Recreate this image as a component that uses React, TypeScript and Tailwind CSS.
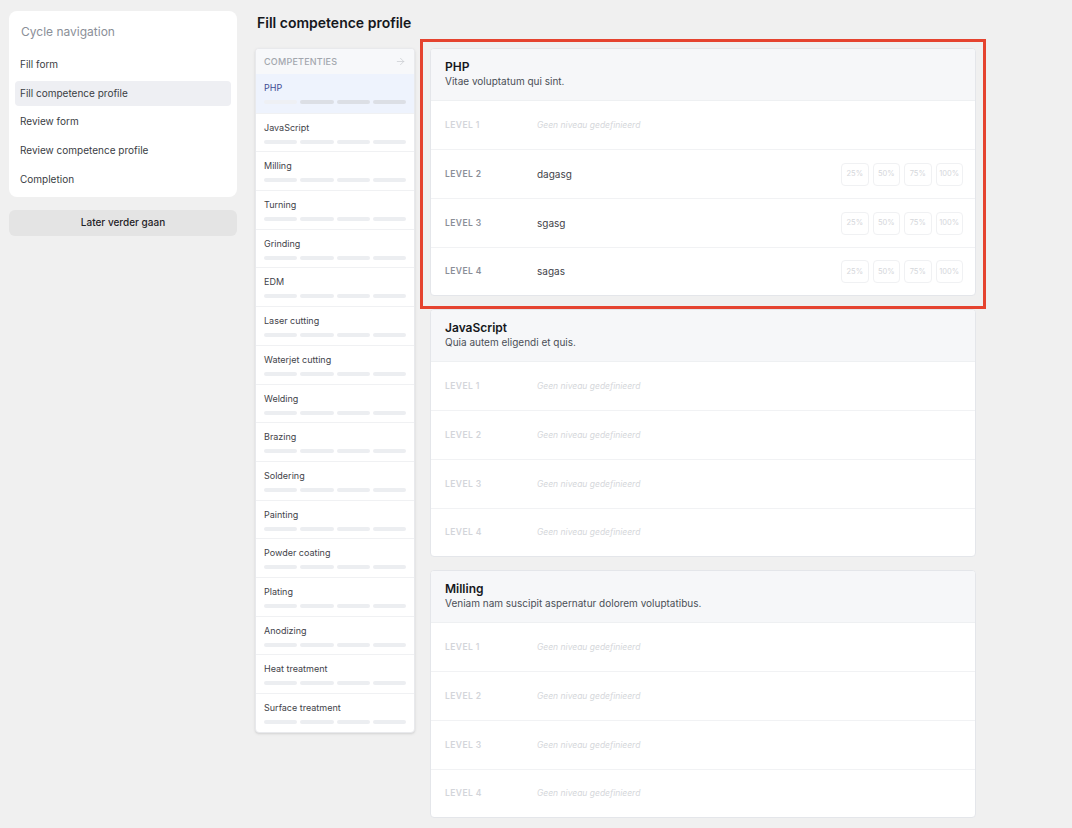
import { ArrowRight } from 'lucide-react'

const navItems = ['Fill form', 'Fill competence profile', 'Review form', 'Review competence profile', 'Completion']

const competencies = [
  'PHP',
  'JavaScript',
  'Milling',
  'Turning',
  'Grinding',
  'EDM',
  'Laser cutting',
  'Waterjet cutting',
  'Welding',
  'Brazing',
  'Soldering',
  'Painting',
  'Powder coating',
  'Plating',
  'Anodizing',
  'Heat treatment',
  'Surface treatment',
]

const cards = [
  {
    name: 'PHP',
    description: 'Vitae voluptatum qui sint.',
    levels: [null, 'dagasg', 'sgasg', 'sagas'],
    highlighted: true,
  },
  {
    name: 'JavaScript',
    description: 'Quia autem eligendi et quis.',
    levels: [null, null, null, null],
  },
  {
    name: 'Milling',
    description: 'Veniam nam suscipit aspernatur dolorem voluptatibus.',
    levels: [null, null, null, null],
  },
]

export default function App() {
  return (
    <div
      className="min-h-screen bg-[#f0f0f0] flex items-start gap-[18px] pl-[9px] pt-[11px] pb-10"
      style={{ fontFamily: 'Inter, "Noto Sans", sans-serif' }}
    >
      {/* Sidebar */}
      <aside className="w-[228px] flex-shrink-0">
        <div className="bg-white rounded-lg px-[6px] pt-[13px] pb-[5px]">
          <div className="px-[6px] text-[12px] leading-[16px] text-[#8b8f98] mb-[12px]">Cycle navigation</div>
          <div className="flex flex-col gap-[3.7px]">
            {navItems.map((item) => (
              <div
                key={item}
                className={
                  'h-[25px] flex items-center px-[5px] rounded text-[10px] text-[#3a3d44] ' +
                  (item === 'Fill competence profile' ? 'bg-[#eeeff3]' : '')
                }
              >
                {item}
              </div>
            ))}
          </div>
        </div>
        <button className="mt-[13px] w-full h-[26px] rounded-md bg-[#e4e4e4] text-[10px] font-medium text-[#1f2227]">
          Later verder gaan
        </button>
      </aside>

      {/* Main */}
      <main className="flex flex-col">
        <h1 className="ml-[2px] mt-[2px] text-[14px] leading-[20px] font-semibold text-[#16181d]">
          Fill competence profile
        </h1>
        <div className="mt-[15px] flex items-start gap-[15px]">
          {/* Competency list */}
          <div className="w-[160px] bg-white border border-[#e8e9ec] rounded-sm shadow-sm overflow-hidden">
            <div className="h-[25px] bg-[#f7f8fa] px-[8px] flex items-center justify-between">
              <span className="text-[9px] font-medium tracking-wide text-[#a3a7ae]">COMPETENTIES</span>
              <ArrowRight size={11} strokeWidth={1.5} className="text-[#c6c9ce]" />
            </div>
            {competencies.map((c, i) => {
              const active = i === 0
              return (
                <div
                  key={c}
                  className={
                    'h-[38.7px] px-[8px] pt-[8px] ' +
                    (i > 0 ? 'border-t border-[#f0f1f3] ' : '') +
                    (active ? 'bg-[#eef3fd]' : '')
                  }
                >
                  <div className={'text-[9px] leading-[12px] ' + (active ? 'text-[#3d4b93]' : 'text-[#3f434a]')}>{c}</div>
                  <div className="mt-[6px] flex gap-[3px]">
                    {[0, 1, 2, 3].map((b) => (
                      <div
                        key={b}
                        className={
                          'h-[4px] flex-1 rounded-full ' +
                          (active ? (b === 0 ? 'bg-[#eef0f4]' : 'bg-[#dcdfe5]') : 'bg-[#eceef1]')
                        }
                      />
                    ))}
                  </div>
                </div>
              )
            })}
          </div>

          {/* Cards */}
          <div className="w-[546px] flex flex-col gap-[13px]">
            {cards.map((card) => (
              <div key={card.name} className="relative">
                <div className="bg-white border border-[#e4e6ea] rounded-sm overflow-hidden">
                  <div className="h-[52px] bg-[#f6f7f9] border-b border-[#eef0f2] px-[14px] pt-[11px]">
                    <div className="text-[12px] leading-[14px] font-semibold text-[#15171c]">{card.name}</div>
                    <div className="mt-[1px] text-[10px] leading-[13px] text-[#4b4f57]">{card.description}</div>
                  </div>
                  {card.levels.map((lvl, i) => (
                    <div
                      key={i}
                      className={
                        'px-[14px] flex items-center box-content ' +
                        (i > 0 ? 'border-t border-[#f1f2f4] ' : '') +
                        (i === 3 ? 'h-[47px]' : 'h-[48px]')
                      }
                    >
                      <div
                        className={
                          'w-[92px] text-[8.5px] font-semibold tracking-wider ' +
                          (lvl ? 'text-[#8a8e97]' : 'text-[#d3d5da]')
                        }
                      >
                        LEVEL {i + 1}
                      </div>
                      {lvl ? (
                        <>
                          <div className="text-[10px] text-[#3f434a]">{lvl}</div>
                          <div className="ml-auto mr-[-2px] flex gap-[4px]">
                            {['25%', '50%', '75%', '100%'].map((p) => (
                              <div
                                key={p}
                                className="w-[27.5px] h-[23px] border border-[#f0f1f3] rounded-sm flex items-center justify-center text-[7.5px] text-[#d5d7db]"
                              >
                                {p}
                              </div>
                            ))}
                          </div>
                        </>
                      ) : (
                        <div className="text-[8.5px] italic text-[#d5d7db]">Geen niveau gedefinieerd</div>
                      )}
                    </div>
                  ))}
                </div>
                {card.highlighted && (
                  <div className="pointer-events-none absolute -left-[10px] -right-[10px] -top-[9px] -bottom-[13px] border-[3px] border-[#e5432f]" />
                )}
              </div>
            ))}
          </div>
        </div>
      </main>
    </div>
  )
}
